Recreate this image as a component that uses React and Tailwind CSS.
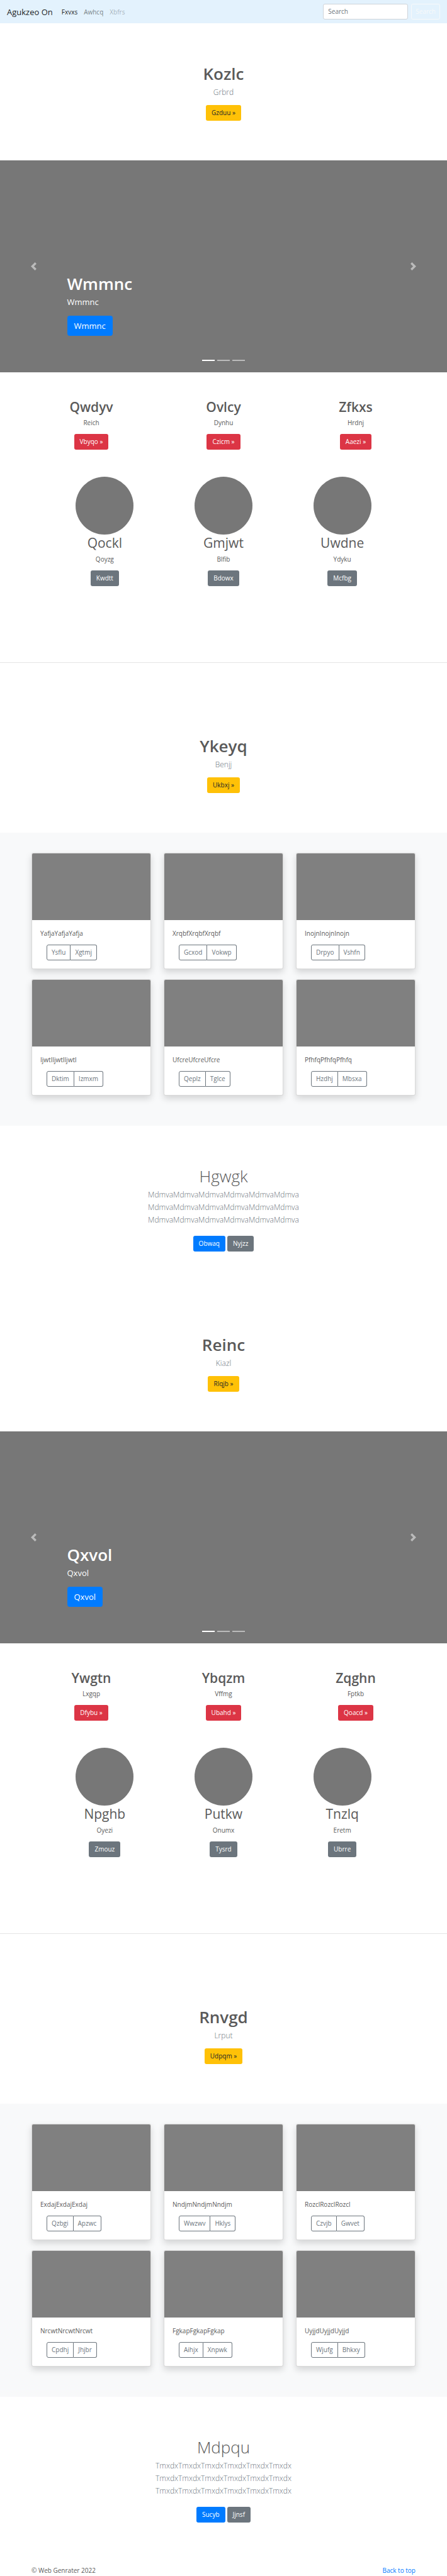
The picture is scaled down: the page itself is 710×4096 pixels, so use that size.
import React from "react";

const pages = [
  {
    hero: { title: "Kozlc", lead: "Grbrd", action: "Gzduu »" },
    slide: "Wmmnc",
    features: [
      { title: "Qwdyv", text: "Reich", action: "Vbyqo »" },
      { title: "Ovlcy", text: "Dynhu", action: "Czicm »" },
      { title: "Zfkxs", text: "Hrdnj", action: "Aaezi »" },
    ],
    people: [
      { title: "Qockl", text: "Qoyzg", action: "Kwdtt" },
      { title: "Gmjwt", text: "Blfib", action: "Bdowx" },
      { title: "Uwdne", text: "Ydyku", action: "Mcfbg" },
    ],
    album: { title: "Ykeyq", lead: "Benjj", action: "Ukbxj »" },
    cards: [
      { text: "YafjaYafjaYafja", actions: ["Ysflu", "Xgtmj"] },
      { text: "XrqbfXrqbfXrqbf", actions: ["Gcxod", "Vokwp"] },
      { text: "InojnInojnInojn", actions: ["Drpyo", "Vshfn"] },
      { text: "IjwtlIjwtlIjwtl", actions: ["Dktim", "Izmxm"] },
      { text: "UfcreUfcreUfcre", actions: ["Qeplz", "Tglce"] },
      { text: "PfhfqPfhfqPfhfq", actions: ["Hzdhj", "Mbsxa"] },
    ],
    closing: {
      title: "Hgwgk",
      line: "MdmvaMdmvaMdmvaMdmvaMdmvaMdmva",
      actions: ["Obwaq", "Nyjzz"],
    },
  },
  {
    hero: { title: "Reinc", lead: "Kiazl", action: "Rlqjb »" },
    slide: "Qxvol",
    features: [
      { title: "Ywgtn", text: "Lxgqp", action: "Dfybu »" },
      { title: "Ybqzm", text: "Vffmg", action: "Ubahd »" },
      { title: "Zqghn", text: "Fptkb", action: "Qoacd »" },
    ],
    people: [
      { title: "Npghb", text: "Oyezi", action: "Zmouz" },
      { title: "Putkw", text: "Onumx", action: "Tysrd" },
      { title: "Tnzlq", text: "Eretm", action: "Ubrre" },
    ],
    album: { title: "Rnvgd", lead: "Lrput", action: "Udpqm »" },
    cards: [
      { text: "ExdajExdajExdaj", actions: ["Qzbgi", "Apzwc"] },
      { text: "NndjmNndjmNndjm", actions: ["Wwzwv", "Hklys"] },
      { text: "RozclRozclRozcl", actions: ["Czvjb", "Gwvet"] },
      { text: "NrcwtNrcwtNrcwt", actions: ["Cpdhj", "Jhjbr"] },
      { text: "FgkapFgkapFgkap", actions: ["Aihjx", "Xnpwk"] },
      { text: "UyjjdUyjjdUyjjd", actions: ["Wjufg", "Bhkxy"] },
    ],
    closing: {
      title: "Mdpqu",
      line: "TmxdxTmxdxTmxdxTmxdxTmxdxTmxdx",
      actions: ["Sucyb", "Jjnsf"],
    },
  },
];

const tones = {
  warning: "bg-[#ffc107] text-[#212529]",
  danger: "bg-[#dc3545] text-white",
  secondary: "bg-[#6c757d] text-white",
  primary: "bg-[#007bff] text-white",
};

function Button({ tone, children }) {
  return (
    <button
      type="button"
      className={`rounded-[3px] px-[9px] py-1 text-[10px] leading-[17px] ${tones[tone]}`}
    >
      {children}
    </button>
  );
}

function Navbar() {
  return (
    <nav className="flex items-center bg-[#e3f2fd] px-[11px] py-[6px]">
      <a href="#" className="text-[13px] leading-[20px] text-black/90">
        Agukzeo On
      </a>
      <div className="ml-[14px] flex flex-1 gap-[10px] text-[10px] leading-[16px]">
        <a href="#" className="text-black/90">Fxvxs</a>
        <a href="#" className="text-black/50">Awhcq</a>
        <a href="#" className="text-black/30">Xbfrs</a>
      </div>
      <form className="flex gap-[5px]" onSubmit={(e) => e.preventDefault()}>
        <input
          type="search"
          aria-label="Search"
          placeholder="Search"
          className="w-[135px] rounded-[3px] border border-[#ced4da] bg-white px-[7px] py-1 text-[10px] leading-[15px] placeholder:text-[#6c757d]"
        />
        <button
          type="submit"
          className="rounded-[3px] border border-[#f8f9fa] px-[6px] py-1 text-[10px] leading-[15px] text-[#f8f9fa]"
        >
          Search
        </button>
      </form>
    </nav>
  );
}

function Hero({ title, lead, action }) {
  return (
    <section className="flex flex-col items-center pt-16 pb-[63px]">
      <h1 className="text-[26px] leading-8 font-semibold">{title}</h1>
      <p className="mt-1 mb-[10px] text-[12px] leading-5 font-light text-[#6c757d]">{lead}</p>
      <Button tone="warning">{action}</Button>
    </section>
  );
}

function Arrow({ label, d }) {
  return (
    <button type="button" aria-label={label} className="flex justify-center opacity-50">
      <svg viewBox="0 0 8 8" className="size-[13px] fill-white">
        <path d={d} />
      </svg>
    </button>
  );
}

function Carousel({ text }) {
  return (
    <section className="grid grid-cols-[15%_1fr_15%] items-center bg-[#777] text-white">
      <Arrow label="Previous" d="M5.25 0l-4 4 4 4 1.5-1.5L4.25 4l2.5-2.5L5.25 0z" />
      <div className="flex flex-col items-start pt-[180px] pb-[18px]">
        <h1 className="text-[26px] leading-8 font-semibold">{text}</h1>
        <p className="mt-[3px] mb-3 text-[13px] leading-5">{text}</p>
        <button
          type="button"
          className="rounded-[4px] bg-[#007bff] px-[11px] py-[6px] text-[13px] leading-5"
        >
          {text}
        </button>
        <div className="mt-[38px] flex gap-1 self-center">
          <span className="h-[2px] w-5 bg-white" />
          <span className="h-[2px] w-5 bg-white/50" />
          <span className="h-[2px] w-5 bg-white/50" />
        </div>
      </div>
      <Arrow label="Next" d="M2.75 0l-1.5 1.5L3.75 4l-2.5 2.5L2.75 8l4-4-4-4z" />
    </section>
  );
}

function Marketing({ features, people }) {
  return (
    <section className="pt-[42px] pb-[52px]">
      <div className="grid grid-cols-3 px-10">
        {features.map((f) => (
          <div key={f.title} className="flex flex-col items-center">
            <h2 className="text-[21px] leading-[26px] font-semibold">{f.title}</h2>
            <p className="mt-1 mb-[10px] text-[10px] leading-4">{f.text}</p>
            <Button tone="danger">{f.action}</Button>
          </div>
        ))}
      </div>
      <div className="mt-[43px] grid grid-cols-3 px-[72px]">
        {people.map((p) => (
          <div key={p.title} className="flex flex-col items-center">
            <div className="size-[92px] rounded-full bg-[#777]" />
            <h2 className="text-[21px] leading-[26px]">{p.title}</h2>
            <p className="mt-[5px] mb-[10px] text-[10px] leading-4">{p.text}</p>
            <Button tone="secondary">{p.action}</Button>
          </div>
        ))}
      </div>
      <hr className="mt-[121px] border-black/10" />
    </section>
  );
}

function Card({ text, actions }) {
  return (
    <article className="overflow-hidden rounded-[3px] border border-black/15 bg-white shadow-[0_5px_11px_rgba(0,0,0,0.15)]">
      <div className="h-[106px] bg-[#808080]" />
      <div className="p-[13px]">
        <p className="text-[10px] leading-4">{text}</p>
        <div className="mt-[10px] ml-[10px] flex text-[10px] leading-[15px] text-[#6c757d]">
          <button type="button" className="rounded-l-[3px] border border-[#6c757d] px-[7px] py-1">
            {actions[0]}
          </button>
          <button
            type="button"
            className="rounded-r-[3px] border border-l-0 border-[#6c757d] px-[7px] py-1"
          >
            {actions[1]}
          </button>
        </div>
      </div>
    </article>
  );
}

function Album({ cards }) {
  return (
    <section className="grid grid-cols-3 gap-x-5 gap-y-4 bg-[#f8f9fa] px-[50px] pt-8 pb-12">
      {cards.map((c) => (
        <Card key={c.text} {...c} />
      ))}
    </section>
  );
}

function Closing({ title, line, actions }) {
  return (
    <section className="flex flex-col items-center pt-16 pb-[68px]">
      <h1 className="text-[26px] leading-8 font-light">{title}</h1>
      <p className="mt-1 text-center text-[12px] leading-5 font-light text-[#6c757d]">
        {line}
        <br />
        {line}
        <br />
        {line}
      </p>
      <div className="mt-[15px] flex gap-[3px]">
        <Button tone="primary">{actions[0]}</Button>
        <Button tone="secondary">{actions[1]}</Button>
      </div>
    </section>
  );
}

export default function App() {
  return (
    <div className="bg-white font-['Open_Sans','Noto_Sans',sans-serif] text-[#5a5a5a]">
      <Navbar />
      <main>
        {pages.map((p) => (
          <React.Fragment key={p.slide}>
            <Hero {...p.hero} />
            <Carousel text={p.slide} />
            <Marketing features={p.features} people={p.people} />
            <Hero {...p.album} />
            <Album cards={p.cards} />
            <Closing {...p.closing} />
          </React.Fragment>
        ))}
      </main>
      <footer className="flex justify-between px-[50px] text-[10px] leading-[17px]">
        <p>© Web Genrater 2022</p>
        <a href="#" className="text-[#007bff]">Back to top</a>
      </footer>
    </div>
  );
}
